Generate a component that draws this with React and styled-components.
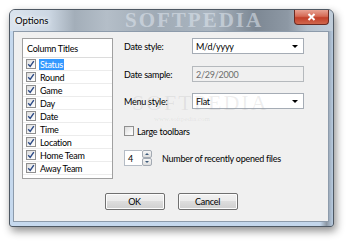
import React from "react";
import styled, { createGlobalStyle } from "styled-components";

const Global = createGlobalStyle`
  html, body { margin: 0; padding: 0; background: #ffffff; }
  body { font-family: Lato, "Noto Sans", sans-serif; }
`;

const Page = styled.div`
  width: 350px;
  height: 243px;
  padding: 9px 0 0 9px;
  box-sizing: border-box;
  overflow: hidden;
`;

const Window = styled.div`
  position: relative;
  width: 325px;
  height: 218px;
  box-sizing: border-box;
  border: 1px solid #4e5863;
  border-radius: 6px 6px 3px 3px;
  background: linear-gradient(90deg, #c6d9ee 0%, #c3d6eb 96%, #8d98a4 98%, #b8cbe0 100%);
  box-shadow: 2px 4px 8px rgba(0,0,0,0.45);
  display: flex;
  flex-direction: column;
  font-family: Lato, "Noto Sans", sans-serif;
  font-size: 9px;
  letter-spacing: -0.25px;
`;

const TitleBar = styled.div`
  height: 21px;
  display: flex;
  align-items: flex-start;
  justify-content: space-between;
  padding-left: 5px;
  position: relative;
  border-radius: 5px 5px 0 0;
  background: linear-gradient(90deg, #dbe4ee 0%, #ccd7e3 12%, #a3aeb9 20%, #b4bec8 30%, #a0abb6 45%, #aab5c0 62%, #7d8894 76%, #8d98a4 86%, #b3bfcb 92%, #c0cdda 100%);
`;

const TitleText = styled.span`
  font-size: 9.5px;
  letter-spacing: 0;
  color: #000;
  margin-top: 5px;
  text-shadow: 0 0 6px #fff, 0 0 4px #fff;
`;

const CloseButton = styled.div`
  width: 35px;
  height: 15px;
  margin-right: 4px;
  border: 1px solid #6b2a22;
  border-top: none;
  border-radius: 0 0 4px 4px;
  background: linear-gradient(180deg, #e8a293 0%, #d56a55 45%, #c2402a 55%, #d0664c 100%);
  display: flex;
  align-items: center;
  justify-content: center;
  box-sizing: border-box;
`;

const TitleWatermark = styled.span`
  position: absolute;
  left: 115px;
  top: -2px;
  font-family: "Liberation Serif", serif;
  font-size: 21px;
  font-weight: bold;
  letter-spacing: 2px;
  color: rgba(225, 232, 240, 0.55);
  pointer-events: none;
`;

const Client = styled.div`
  flex: 1;
  margin: 0 4px 4px 3px;
  border: 1px solid #8d9bab;
  background: #f0f0f0;
  padding: 6px 8px 0 8px;
  display: flex;
  flex-direction: column;
  position: relative;
`;

const Body = styled.div`
  display: flex;
  gap: 11px;
`;

const ListBox = styled.div`
  width: 91px;
  height: 141px;
  box-sizing: border-box;
  border: 1px solid #a0a0a0;
  background: #fff;
  display: flex;
  flex-direction: column;
`;

const ListHeader = styled.div`
  height: 19px;
  box-sizing: border-box;
  border-bottom: 1px solid #dcdcdc;
  color: #000;
  padding: 4px 0 0 4px;
`;

const ListRow = styled.div`
  height: 13px;
  box-sizing: border-box;
  border-bottom: 1px solid #ececec;
  display: flex;
  align-items: center;
  padding-left: 3px;
  gap: 3px;
`;

const Box = styled.span`
  width: 10px;
  height: 10px;
  box-sizing: border-box;
  border: 1px solid #8f8f8f;
  background: linear-gradient(135deg, #dcdcdc 0%, #f4f4f4 60%, #ffffff 100%);
  display: inline-flex;
  align-items: center;
  justify-content: center;
  flex: none;
`;

const ItemText = styled.span`
  line-height: 11px;
  padding: 0 1px;
  color: ${(p) => (p.$selected ? "#fff" : "#000")};
  background: ${(p) => (p.$selected ? "#3399ff" : "transparent")};
`;

const Right = styled.div`
  display: flex;
  flex-direction: column;
`;

const FieldRow = styled.div`
  display: flex;
  align-items: center;
  height: 16px;
  margin-bottom: ${(p) => p.$mb || 0}px;
`;

const Label = styled.span`
  width: 68px;
  color: #000;
`;

const Combo = styled.div`
  width: 112px;
  height: 16px;
  box-sizing: border-box;
  border: 1px solid ${(p) => (p.$disabled ? "#b5b9bd" : "#a5acb5")};
  background: ${(p) => (p.$disabled ? "#f0f0f0" : "#fff")};
  display: flex;
  align-items: center;
  justify-content: space-between;
  padding: 0 5px 0 3px;
  color: ${(p) => (p.$disabled ? "#6d6d6d" : "#000")};
`;

const Arrow = styled.span`
  width: 0;
  height: 0;
  border-left: 3px solid transparent;
  border-right: 3px solid transparent;
  border-top: 3px solid #000;
`;

const CheckRow = styled.label`
  display: flex;
  align-items: center;
  gap: 3px;
  color: #000;
  margin-top: 17px;
  height: 10px;
`;

const SpinRow = styled.div`
  display: flex;
  align-items: center;
  margin-top: 14px;
  height: 16px;
`;

const SpinEdit = styled.div`
  width: 18px;
  height: 16px;
  box-sizing: border-box;
  border: 1px solid #b5bcc5;
  border-right: none;
  background: #fff;
  display: flex;
  align-items: center;
  padding-left: 3px;
`;

const SpinButtons = styled.div`
  width: 10px;
  height: 16px;
  display: flex;
  flex-direction: column;
`;

const SpinBtn = styled.div`
  flex: 1;
  box-sizing: border-box;
  border: 1px solid #a3aab3;
  border-radius: 2px;
  background: linear-gradient(180deg, #f6f6f6, #dedede);
  display: flex;
  align-items: center;
  justify-content: center;
`;

const SpinArrow = styled.span`
  width: 0;
  height: 0;
  border-left: 2px solid transparent;
  border-right: 2px solid transparent;
  ${(p) => (p.$up ? "border-bottom: 2px solid #3d5a7a;" : "border-top: 2px solid #3d5a7a;")}
`;

const SpinLabel = styled.span`
  margin-left: 10px;
`;

const Footer = styled.div`
  display: flex;
  justify-content: center;
  gap: 13px;
  margin-top: 14px;
`;

const Button = styled.div`
  width: 60px;
  height: 17px;
  box-sizing: border-box;
  border: 1px solid #707070;
  border-radius: 2px;
  background: linear-gradient(180deg, #f2f2f2 0%, #ebebeb 45%, #dddddd 50%, #cfcfcf 100%);
  box-shadow: inset 0 0 0 1px #fcfcfc;
  display: flex;
  align-items: center;
  justify-content: center;
  color: #000;
`;

const Watermark = styled.span`
  position: absolute;
  font-family: "Liberation Serif", serif;
  font-size: ${(p) => p.$size}px;
  left: ${(p) => p.$x}px;
  top: ${(p) => p.$y}px;
  color: rgba(150, 150, 150, 0.16);
  letter-spacing: ${(p) => p.$ls || 0}px;
  pointer-events: none;
`;

const Check = () => (
  <svg width="8" height="8" viewBox="0 0 8 8">
    <path d="M1.2 4.2 L3.2 6.4 L6.8 1.2" fill="none" stroke="#2c4a86" strokeWidth="1.4" />
  </svg>
);

const items = ["Status", "Round", "Game", "Day", "Date", "Time", "Location", "Home Team", "Away Team"];

export default function App() {
  return (
    <>
      <Global />
      <Page>
        <Window>
          <TitleBar>
            <TitleText>Options</TitleText>
            <TitleWatermark>SOFTPEDIA</TitleWatermark>
            <CloseButton>
              <svg width="9" height="8" viewBox="0 0 9 8">
                <path d="M1.5 1 L7.5 7 M7.5 1 L1.5 7" stroke="#fff" strokeWidth="2" />
              </svg>
            </CloseButton>
          </TitleBar>
          <Client>
            <Body>
              <ListBox>
                <ListHeader>Column Titles</ListHeader>
                {items.map((t, i) => (
                  <ListRow key={t}>
                    <Box><Check /></Box>
                    <ItemText $selected={i === 0}>{t}</ItemText>
                  </ListRow>
                ))}
              </ListBox>
              <Right>
                <FieldRow $mb={12}>
                  <Label>Date style:</Label>
                  <Combo>M/d/yyyy<Arrow /></Combo>
                </FieldRow>
                <FieldRow $mb={11}>
                  <Label>Date sample:</Label>
                  <Combo $disabled>2/29/2000</Combo>
                </FieldRow>
                <FieldRow>
                  <Label>Menu style:</Label>
                  <Combo>Flat<Arrow /></Combo>
                </FieldRow>
                <CheckRow>
                  <Box />
                  Large toolbars
                </CheckRow>
                <SpinRow>
                  <SpinEdit>4</SpinEdit>
                  <SpinButtons>
                    <SpinBtn><SpinArrow $up /></SpinBtn>
                    <SpinBtn><SpinArrow /></SpinBtn>
                  </SpinButtons>
                  <SpinLabel>Number of recently opened files</SpinLabel>
                </SpinRow>
              </Right>
            </Body>
            <Footer>
              <Button>OK</Button>
              <Button>Cancel</Button>
            </Footer>
            <Watermark $size={22} $x={118} $y={58} $ls={2}>SOFTPEDIA</Watermark>
            <Watermark $size={7} $x={140} $y={83}>www.softpedia.com</Watermark>
          </Client>
        </Window>
      </Page>
    </>
  );
}
